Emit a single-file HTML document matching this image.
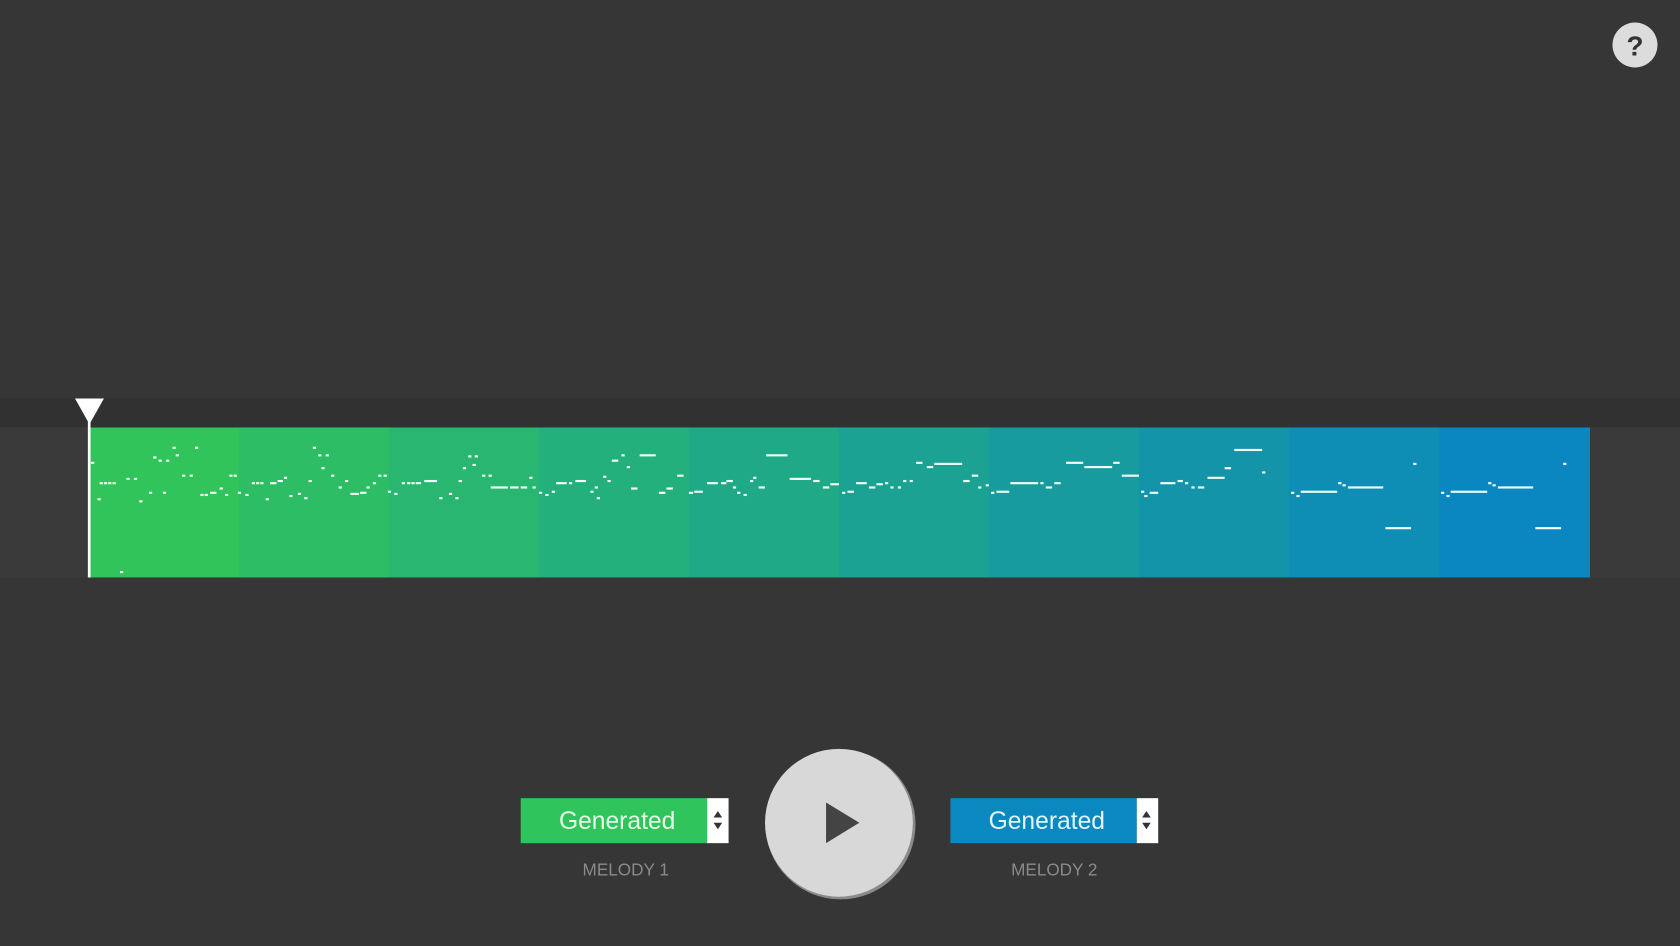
<!DOCTYPE html>
<html><head><meta charset="utf-8"><style>
html,body{margin:0;padding:0;background:#363636;overflow:hidden}
svg{display:block}
</style></head><body>
<svg width="1680" height="946" viewBox="0 0 1568 883" xmlns="http://www.w3.org/2000/svg" preserveAspectRatio="none">
<rect width="1568" height="883" fill="#363636"/>
<rect y="372" width="1568" height="27" fill="#313131"/>
<rect y="399" width="1568" height="140" fill="#3a3a3a"/>
<g>
<rect x="83" y="399" width="141" height="140" fill="#31c45a"/>
<rect x="223" y="399" width="141" height="140" fill="#2dbd65"/>
<rect x="363" y="399" width="141" height="140" fill="#28b671"/>
<rect x="503" y="399" width="141" height="140" fill="#24b07c"/>
<rect x="643" y="399" width="141" height="140" fill="#20a987"/>
<rect x="783" y="399" width="141" height="140" fill="#1ba293"/>
<rect x="923" y="399" width="141" height="140" fill="#179b9e"/>
<rect x="1063" y="399" width="141" height="140" fill="#1394a9"/>
<rect x="1203" y="399" width="141" height="140" fill="#0e8eb5"/>
<rect x="1343" y="399" width="141" height="140" fill="#0a87c0"/>
</g>
<g id="n" fill="#f4fff6"></g>
<rect x="82" y="393" width="2.5" height="146" fill="#fff"/>
<polygon points="70,372 97,372 83.5,396" fill="#fff"/>
<circle cx="1526" cy="42" r="21" fill="#dcdcdc"/>
<text x="1526" y="52" text-anchor="middle" font-family="Liberation Sans, sans-serif" font-weight="bold" font-size="26" fill="#333">?</text>
<rect x="486" y="745" width="174" height="42" fill="#2fc55c"/>
<rect x="660" y="745" width="20" height="42" fill="#fff"/>
<polygon points="666,763 674,763 670,757" fill="#333"/><polygon points="666,768 674,768 670,774" fill="#333"/>
<text x="576" y="774" text-anchor="middle" font-family="Liberation Sans, sans-serif" font-size="23" fill="#e8fbe9">Generated</text>
<rect x="887" y="745" width="174" height="42" fill="#0a89c1"/>
<rect x="1061" y="745" width="20" height="42" fill="#fff"/>
<polygon points="1066,763 1074,763 1070,757" fill="#333"/><polygon points="1066,768 1074,768 1070,774" fill="#333"/>
<text x="977" y="774" text-anchor="middle" font-family="Liberation Sans, sans-serif" font-size="23" fill="#e5f3fa">Generated</text>
<text x="584" y="817" text-anchor="middle" font-family="Liberation Sans, sans-serif" font-size="16" fill="#8a8a8a">MELODY 1</text>
<text x="984" y="817" text-anchor="middle" font-family="Liberation Sans, sans-serif" font-size="16" fill="#8a8a8a">MELODY 2</text>
<circle cx="784.5" cy="769.5" r="70" fill="#8a8a8a"/>
<circle cx="783" cy="768" r="69" fill="#d8d8d8"/>
<polygon points="771,749 771,787 802,768" fill="#444"/>
</svg>
<script>
var d=[[85,432,3],[93,451,3],[97,451,3],[101,451,3],[105,451,3],[118,447,3],[125,447,3],[91,466,3],[130,468,3],[143,427,3],[148,430,3],[155,430,3],[161,418,3],[164,425,3],[182,418,3],[139,460,3],[152,460,3],[170,444,3],[177,444,3],[187,462,3],[191,462,3],[196,460,6],[205,456,3],[214,444,3],[218,444,3],[210,462,3],[222,460,3],[229,462,3],[235,451,3],[239,451,3],[243,451,3],[248,466,3],[252,451,6],[259,449,5],[265,446,3],[270,463,3],[278,461,3],[284,465,3],[288,449,3],[292,418,3],[297,425,3],[304,425,3],[300,437,3],[309,444,3],[316,455,3],[322,449,3],[327,461,8],[336,460,6],[342,455,3],[348,451,3],[353,444,3],[358,444,3],[362,459,3],[368,461,3],[375,451,3],[380,451,3],[384,451,3],[388,451,5],[396,449,12],[410,465,3],[419,461,3],[425,465,3],[428,449,3],[432,437,3],[437,426,3],[443,426,3],[441,434,3],[450,444,3],[456,444,3],[458,455,16],[476,455,8],[486,455,6],[494,446,3],[497,455,3],[503,460,3],[509,462,3],[515,459,3],[519,451,10],[531,451,3],[537,449,10],[551,459,3],[557,465,3],[555,455,3],[563,445,3],[567,449,3],[571,430,6],[580,425,3],[585,436,3],[597,425,15],[589,456,6],[615,460,6],[622,456,6],[632,444,6],[643,460,4],[648,459,8],[660,451,10],[673,451,5],[678,449,6],[684,455,3],[688,460,3],[694,462,3],[700,449,3],[703,446,3],[708,455,6],[715,425,20],[737,447,20],[759,449,6],[768,455,6],[775,452,8],[786,460,3],[791,459,6],[799,451,10],[811,455,6],[818,452,6],[826,451,3],[831,455,3],[838,455,3],[843,449,3],[849,449,3],[855,432,6],[865,436,6],[872,433,26],[899,449,6],[907,444,6],[913,455,3],[920,453,3],[925,460,3],[930,459,12],[943,451,26],[971,451,3],[976,455,6],[984,451,6],[995,432,16],[1012,436,26],[1039,432,6],[1047,444,16],[1065,459,3],[1068,463,3],[1073,460,8],[1083,451,14],[1099,449,5],[1106,451,3],[1112,455,3],[1118,455,6],[1127,446,16],[1143,437,6],[1152,420,26],[1178,441,3],[1205,460,3],[1210,463,3],[1214,459,34],[1249,451,3],[1253,453,3],[1258,455,33],[1293,493,24],[1319,433,3],[1345,460,3],[1350,463,3],[1354,459,34],[1389,451,3],[1393,453,3],[1398,455,33],[1433,493,24],[1459,433,3],[112,534,3]];
var g=document.getElementById('n'),s='';
d.forEach(function(a){s+='<rect x="'+a[0]+'" y="'+(a[1]-1)+'" width="'+a[2]+'" height="2"/>';});
g.innerHTML=s;
</script>
</body></html>
